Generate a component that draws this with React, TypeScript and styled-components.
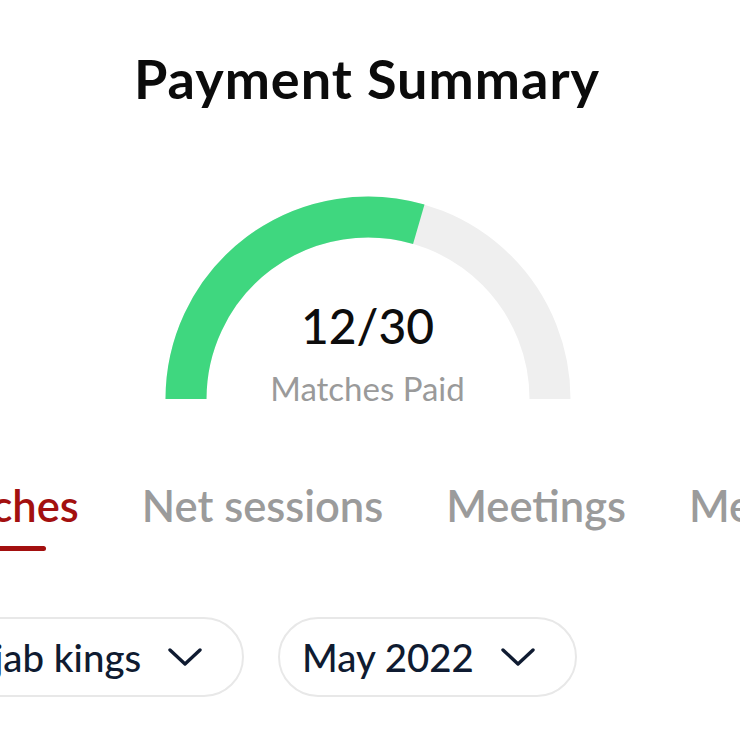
import styled, { createGlobalStyle } from "styled-components";

const GlobalStyle = createGlobalStyle`
  html, body {
    margin: 0;
    padding: 0;
    background: #ffffff;
    overflow: hidden;
  }
  body {
    font-family: "Lato", "Noto Sans", sans-serif;
  }
`;

const Page = styled.div`
  width: 740px;
  height: 740px;
  overflow: hidden;
  display: flex;
  flex-direction: column;
`;

const Title = styled.h1`
  margin: 47px 6px 0 0;
  text-align: center;
  font-size: 54px;
  font-weight: 700;
  line-height: 64px;
  color: #0b0b0b;
  letter-spacing: 1px;
`;

const GaugeBox = styled.div`
  position: relative;
  align-self: center;
  width: 406px;
  height: 204px;
  margin: 84px 5px 0 0;
`;

const GaugeText = styled.div`
  position: absolute;
  left: 0;
  right: 0;
  bottom: -9px;
  display: flex;
  flex-direction: column;
  align-items: center;
`;

const Score = styled.div`
  font-size: 48px;
  font-weight: 500;
  line-height: 56px;
  margin-bottom: 14px;
  color: #0d0d0d;
`;

const Caption = styled.div`
  font-size: 33px;
  line-height: 40px;
  color: #9a9a9a;
`;

const TabRow = styled.div`
  display: flex;
  gap: 63px;
  margin: 80px 0 0 -86px;
  white-space: nowrap;
`;

const Tab = styled.div<{ $active?: boolean }>`
  position: relative;
  font-size: 43.5px;
  font-weight: 600;
  line-height: 52px;
  padding-bottom: 20px;
  color: ${(p) => (p.$active ? "#a3100f" : "#9b9b9b")};
`;

const Underline = styled.span`
  position: absolute;
  left: 36px;
  right: 33px;
  bottom: 0;
  height: 5px;
  border-radius: 3px;
  background: #a3100f;
`;

const FilterRow = styled.div`
  display: flex;
  gap: 34px;
  margin: 66px 0 0 -96px;
`;

const Pill = styled.div`
  box-sizing: border-box;
  display: flex;
  align-items: center;
  gap: 27px;
  height: 80px;
  padding: 0 40px 0 22px;
  border: 2px solid #e8e8e8;
  border-radius: 40px;
  white-space: nowrap;
  font-size: 38.4px;
  font-weight: 500;
  color: #0f1b31;
`;

const Chevron = () => (
  <svg width="34" height="20" viewBox="0 0 34 20" fill="none">
    <path
      d="M2 3 L17 17 L32 3"
      stroke="#0f1b31"
      strokeWidth="3.4"
      strokeLinecap="round"
      strokeLinejoin="round"
    />
  </svg>
);

const Gauge = ({ value }: { value: number }) => {
  const cx = 203;
  const cy = 204;
  const r = 182;
  const angle = Math.PI * (1 - value);
  const ex = cx + r * Math.cos(angle);
  const ey = cy - r * Math.sin(angle);
  return (
    <svg width="406" height="204" viewBox="0 0 406 204">
      <path
        d={`M ${cx - r} ${cy} A ${r} ${r} 0 0 1 ${cx + r} ${cy}`}
        stroke="#efefef"
        strokeWidth="41"
        fill="none"
      />
      <path
        d={`M ${cx - r} ${cy} A ${r} ${r} 0 0 1 ${ex} ${ey}`}
        stroke="#3fd77f"
        strokeWidth="41"
        fill="none"
      />
    </svg>
  );
};

const App = () => {
  return (
    <Page>
      <GlobalStyle />
      <Title>Payment Summary</Title>

      <GaugeBox>
        <Gauge value={0.59} />
        <GaugeText>
          <Score>12/30</Score>
          <Caption>Matches Paid</Caption>
        </GaugeText>
      </GaugeBox>

      <TabRow>
        <Tab $active>
          Matches
          <Underline />
        </Tab>
        <Tab>Net sessions</Tab>
        <Tab>Meetings</Tab>
        <Tab>Membership</Tab>
      </TabRow>

      <FilterRow>
        <Pill>
          Punjab kings
          <Chevron />
        </Pill>
        <Pill>
          May 2022
          <Chevron />
        </Pill>
      </FilterRow>
    </Page>
  );
};

export default App;
